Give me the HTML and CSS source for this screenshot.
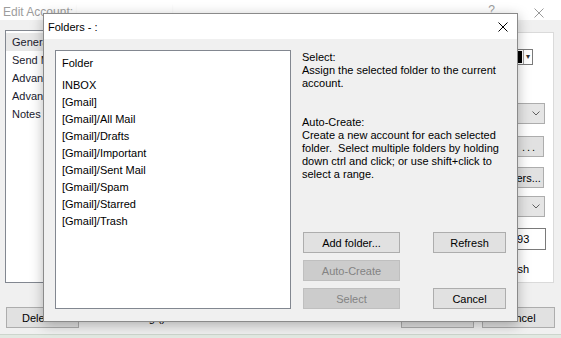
FILE: index.html
```html
<!DOCTYPE html>
<html lang="en">
<head>
  <meta charset="UTF-8" />
  <title>Folders</title>
  <link rel="stylesheet" href="styles.css">
</head>
<body>
  <div class="window">
    <div class="win-title">
      <span class="win-caption">Edit Account:</span>
      <span class="redact"></span>
      <span class="win-help">?</span>
      <svg class="win-close" width="10" height="10" viewBox="0 0 10 10">
        <path d="M0.5 0.5 L9.5 9.5 M9.5 0.5 L0.5 9.5" stroke="#9a9a9a" stroke-width="1" fill="none" />
      </svg>
    </div>

    <div class="win-body">
      <ul class="nav-list">
        <li class="active">General</li>
        <li>Send Mail</li>
        <li>Advanced</li>
        <li>Advanced Folders</li>
        <li>Notes</li>
      </ul>

      <div class="tab-panel">
        <div class="color-combo">
          <span class="swatch"></span>
          <span class="drop">&#9662;</span>
        </div>
        <div class="combo combo-first">
          <svg class="chev" width="8" height="5" viewBox="0 0 8 5"><path d="M0.5 0.5 L4 4 L7.5 0.5" stroke="#606060" fill="none" /></svg>
        </div>
        <button class="btn browse-btn">...</button>
        <button class="btn folders-btn">Folders...</button>
        <div class="combo combo-second">
          <svg class="chev" width="8" height="5" viewBox="0 0 8 5"><path d="M0.5 0.5 L4 4 L7.5 0.5" stroke="#606060" fill="none" /></svg>
        </div>
        <div class="field">993</div>
        <div class="check-label">Auto-refresh</div>
      </div>
    </div>

    <div class="win-footer">
      <button class="btn footer-btn">Delete...</button>
      <span class="footer-note">Sorting ()</span>
      <button class="btn footer-btn ok-btn">OK</button>
      <button class="btn footer-btn">Cancel</button>
    </div>
  </div>
  <div class="desk"></div>

  <!-- Folders dialog, on top of the account window -->
  <div class="dialog">
    <div class="dlg-title">
      <span>Folders - :</span>
      <svg class="dlg-close" width="10" height="10" viewBox="0 0 10 10">
        <path d="M0.5 0.5 L9.5 9.5 M9.5 0.5 L0.5 9.5" stroke="#000" stroke-width="1" fill="none" />
      </svg>
    </div>

    <div class="dlg-body">
      <div class="folder-list">
        <div class="folder-head">Folder</div>
        <div class="folder">INBOX</div>
        <div class="folder">[Gmail]</div>
        <div class="folder">[Gmail]/All Mail</div>
        <div class="folder">[Gmail]/Drafts</div>
        <div class="folder">[Gmail]/Important</div>
        <div class="folder">[Gmail]/Sent Mail</div>
        <div class="folder">[Gmail]/Spam</div>
        <div class="folder">[Gmail]/Starred</div>
        <div class="folder">[Gmail]/Trash</div>
      </div>

      <div class="info">
        <p class="help-text">
          Select:<br>
          Assign the selected folder to the current<br>
          account.<br>
          <br>
          <br>
          Auto-Create:<br>
          Create a new account for each selected<br>
          folder.&nbsp; Select multiple folders by holding<br>
          down ctrl and click; or use shift+click to<br>
          select a range.
        </p>

        <div class="actions">
          <button class="btn wide">Add folder...</button>
          <button class="btn narrow">Refresh</button>
          <button class="btn wide" disabled>Auto-Create</button>
          <span></span>
          <button class="btn wide" disabled>Select</button>
          <button class="btn narrow">Cancel</button>
        </div>
      </div>
    </div>
  </div>
</body>
</html>
```

FILE: styles.css
```css
body {
  margin: 0;
  width: 561px;
  height: 338px;
  overflow: hidden;
  position: relative;
  background-color: #f0f0f0;
  font-family: 'Liberation Sans', Arial, sans-serif;
  font-size: 11px;
  color: #000;
}

.btn {
  box-sizing: border-box;
  height: 21px;
  padding: 0;
  background-color: #e1e1e1;
  border: 1px solid #adadad;
  font-family: inherit;
  font-size: 11px;
  color: #000;
}

.btn:disabled {
  background-color: #cccccc;
  border-color: #bfbfbf;
  color: #838383;
}

/* background window */
.window {
  height: 334px;
  border-bottom: 1px solid #cdd5cd;
}

.win-title {
  height: 20px;
  background-color: #fff;
  display: flex;
  align-items: flex-start;
  padding-left: 3px;
  color: #9d9d9d;
  font-size: 12px;
}

.win-caption {
  margin-top: 5px;
  line-height: 14px;
}

.redact {
  width: 95px;
  height: 11px;
  margin: 3px 0 0 4px;
  background-color: #fff;
  box-shadow: 0 2px 2px rgba(0, 0, 0, 0.06);
}

.win-help {
  margin-left: auto;
  margin-top: 3px;
  line-height: 14px;
}

.win-close {
  margin: 8px 17px 0 39px;
}

.win-body {
  display: flex;
  gap: 8px;
  padding: 10px 7px 0 5px;
}

.nav-list {
  list-style: none;
  margin: 0;
  padding: 2px 0 0 0;
  width: 130px;
  height: 253px;
  box-sizing: border-box;
  background-color: #fff;
  border: 1px solid #828790;
}

.nav-list li {
  height: 18px;
  line-height: 18px;
  padding-left: 6px;
  white-space: nowrap;
  color: #1a1a2e;
}

.nav-list li.active {
  background-color: #e8e8e8;
}

.tab-panel {
  flex: 1;
  margin-top: 2px;
  height: 251px;
  box-sizing: border-box;
  background-color: #fff;
  border: 1px solid #dadada;
  padding-right: 8px;
  display: flex;
  flex-direction: column;
  align-items: flex-end;
}

.color-combo {
  margin: 16px 12px 0 0;
  width: 60px;
  height: 16px;
  box-sizing: border-box;
  border: 1px solid #7a7a7a;
  background-color: #fff;
  display: flex;
}

.color-combo .swatch {
  flex: 1;
  margin: 1px 1px 1px 2px;
  background-color: #000;
}

.color-combo .drop {
  width: 8px;
  border-left: 1px solid #a0a0a0;
  font-size: 8px;
  line-height: 14px;
  text-align: center;
  color: #333;
}

.combo {
  width: 200px;
  height: 21px;
  box-sizing: border-box;
  background-color: #e5e5e5;
  border: 1px solid #adadad;
  display: flex;
  align-items: center;
  justify-content: flex-end;
  padding-right: 4px;
}

.combo-first {
  margin-top: 38px;
}

.combo-second {
  margin-top: 8px;
}

.browse-btn {
  width: 35px;
  margin: 12px 1px 0 0;
  padding-left: 6px;
  letter-spacing: 2px;
}

.folders-btn {
  width: 52px;
  margin: 10px 1px 0 0;
}

.field {
  width: 37px;
  height: 22px;
  box-sizing: border-box;
  margin: 11px -1px 0 0;
  padding-left: 1px;
  line-height: 20px;
  background-color: #fff;
  border: 1px solid #7a7a7a;
}

.check-label {
  margin: 12px 16px 0 0;
  line-height: 14px;
}

.win-footer {
  display: flex;
  align-items: flex-start;
  padding: 24px 6px 0 6px;
}

.footer-btn {
  width: 73px;
}

.footer-note {
  margin: 4px 0 0 41px;
  line-height: 14px;
}

.ok-btn {
  margin-left: auto;
  margin-right: 8px;
}

.desk {
  height: 3px;
  background-color: #e2e9e2;
}

/* folders dialog */
.dialog {
  position: absolute;
  left: 43px;
  top: 13px;
  width: 475px;
  height: 309px;
  box-sizing: border-box;
  border: 1px solid #8a8a8a;
  background-color: #f0f0f0;
  box-shadow: 0 3px 12px rgba(0, 0, 0, 0.28);
  display: flex;
  flex-direction: column;
}

.dlg-title {
  height: 25px;
  background-color: #fff;
  display: flex;
  align-items: center;
  justify-content: space-between;
  padding: 0 9px 0 4px;
}

.dlg-body {
  flex: 1;
  display: flex;
  gap: 11px;
  padding: 11px 11px 12px 11px;
}

.folder-list {
  width: 236px;
  box-sizing: border-box;
  background-color: #fff;
  border: 1px solid #828790;
  padding: 4px 6px;
}

.folder-head {
  line-height: 17px;
  margin-bottom: 5px;
}

.folder {
  line-height: 17px;
}

.info {
  flex: 1;
  display: flex;
  flex-direction: column;
}

.help-text {
  margin: 1px 0 0 0;
  line-height: 13px;
  white-space: nowrap;
}

.actions {
  margin-top: auto;
  margin-left: 1px;
  display: grid;
  grid-template-columns: 97px 73px;
  justify-content: space-between;
  row-gap: 7px;
}
```
